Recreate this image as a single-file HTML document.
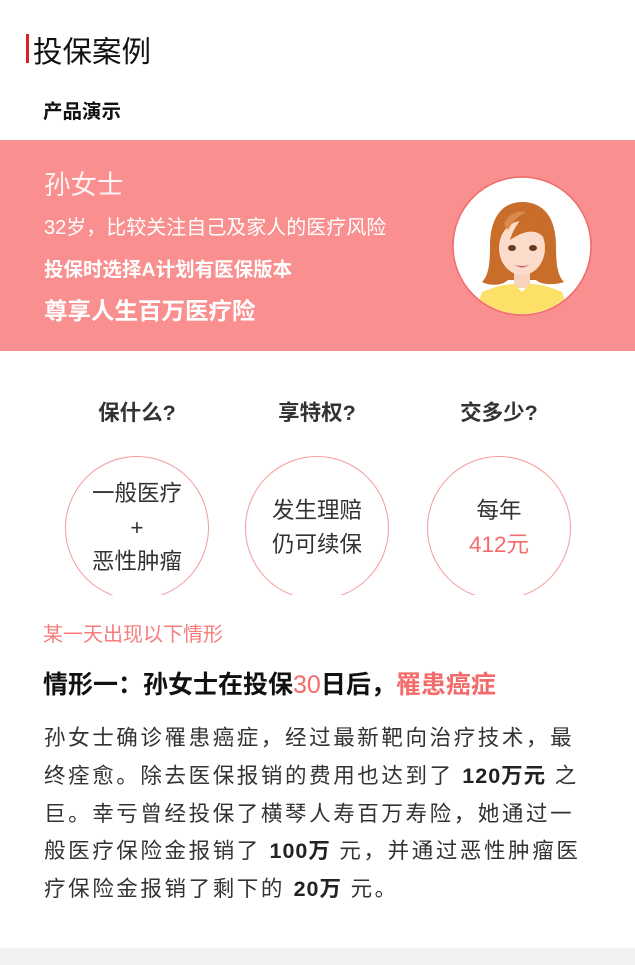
<!DOCTYPE html>
<html><head><meta charset="utf-8"><style>
*{margin:0;padding:0;box-sizing:border-box}
body{width:635px;height:965px;background:#fff;font-family:"Liberation Sans","Noto Sans CJK SC",sans-serif;color:#222;position:relative;overflow:hidden}
.a{position:absolute;white-space:nowrap}
.c{position:absolute;width:144px;height:144px;border:1.3px solid #f59a9a;border-radius:50%;top:456px;display:flex;flex-direction:column;align-items:center;justify-content:center;font-size:22.5px;color:#333;line-height:34px}
.h{position:absolute;top:396px;font-size:21.5px;font-weight:bold;color:#333;width:160px;text-align:center}
.p{position:absolute;left:44px;top:720px;font-size:21.5px;line-height:37.8px;color:#333;letter-spacing:2.6px}
.p b{font-weight:bold;color:#222;letter-spacing:1px}
</style></head><body>
<div class="a" style="left:26px;top:34px;width:3px;height:29px;background:#e02020"></div>
<div class="a" style="left:33px;top:29px;font-size:29.5px;color:#111">投保案例</div>
<div class="a" style="left:43px;top:95px;font-size:19.5px;font-weight:bold;color:#111">产品演示</div>
<div class="a" style="left:0;top:140px;width:635px;height:211px;background:#f98f8f"></div>
<div class="a" style="left:44px;top:163px;font-size:26.5px;color:#fff3f3">孙女士</div>
<div class="a" style="left:44px;top:211px;font-size:20px;color:#fff">32岁，比较关注自己及家人的医疗风险</div>
<div class="a" style="left:44px;top:253px;font-size:19.5px;font-weight:bold;color:#fff">投保时选择A计划有医保版本</div>
<div class="a" style="left:44px;top:292px;font-size:23.5px;font-weight:bold;color:#fff">尊享人生百万医疗险</div>
<svg class="a" style="left:452px;top:176px" width="140" height="140" viewBox="0 0 140 140">
<defs><clipPath id="cl"><circle cx="70" cy="70" r="68"/></clipPath></defs>
<circle cx="70" cy="70" r="69" fill="#fff" stroke="#f06a6a" stroke-width="1.5"/>
<g clip-path="url(#cl)">
<path d="M30 106 C36 100 38 90 38 70 C38 42 50 26 70 26 C92 26 104 42 104 70 C104 90 106 100 112 106 C100 110 88 108 84 104 L56 104 C50 110 38 110 30 106Z" fill="#c96d2a"/>
<rect x="62" y="90" width="16" height="22" fill="#f9d2bd"/>
<ellipse cx="70" cy="72" rx="23" ry="27" fill="#fbdccb"/>
<path d="M46 64 C48 46 60 38 72 40 C66 46 60 56 58 64 C70 56 84 50 94 64 C94 44 84 34 70 34 C56 34 46 46 46 64Z" fill="#c96d2a"/>
<path d="M52 48 C56 38 66 34 74 36 C66 40 60 46 56 54Z" fill="#dc8a4c"/>
<ellipse cx="60" cy="72" rx="4" ry="3" fill="#6b3a1a"/><ellipse cx="81" cy="72" rx="4" ry="3" fill="#6b3a1a"/>
<path d="M63 89 Q70 94 77 89 Q70 91 63 89Z" fill="#c7607a"/>
<path d="M22 140 L30 116 Q50 108 62 108 L70 116 L78 108 Q92 108 110 116 L118 140Z" fill="#fde068"/>
</g></svg>
<div class="h" style="left:57px">保什么?</div>
<div class="h" style="left:237px">享特权?</div>
<div class="h" style="left:419px">交多少?</div>
<div class="c" style="left:65px"><div>一般医疗</div><div>+</div><div>恶性肿瘤</div></div>
<div class="c" style="left:245px"><div>发生理赔</div><div>仍可续保</div></div>
<div class="c" style="left:427px"><div>每年</div><div style="color:#f46b6b">412元</div></div>
<div class="a" style="left:0;top:595px;width:635px;height:12px;background:#fff"></div>
<div class="a" style="left:43px;top:618px;font-size:20px;color:#f77c7c">某一天出现以下情形</div>
<div class="a" style="left:43px;top:665px;font-size:25px;font-weight:bold;color:#111">情形一：孙女士在投保<span style="color:#f46b6b;font-weight:normal">30</span>日后，<span style="color:#f46b6b">罹患癌症</span></div>
<div class="p" style="white-space:nowrap">孙女士确诊罹患癌症，经过最新靶向治疗技术，最<br>终痊愈。除去医保报销的费用也达到了 <b>120万元</b> 之<br>巨。幸亏曾经投保了横琴人寿百万寿险，她通过一<br>般医疗保险金报销了 <b>100万</b> 元，并通过恶性肿瘤医<br>疗保险金报销了剩下的 <b>20万</b> 元。</div>
<div class="a" style="left:0;top:948px;width:635px;height:17px;background:#f2f2f2"></div>
</body></html>
